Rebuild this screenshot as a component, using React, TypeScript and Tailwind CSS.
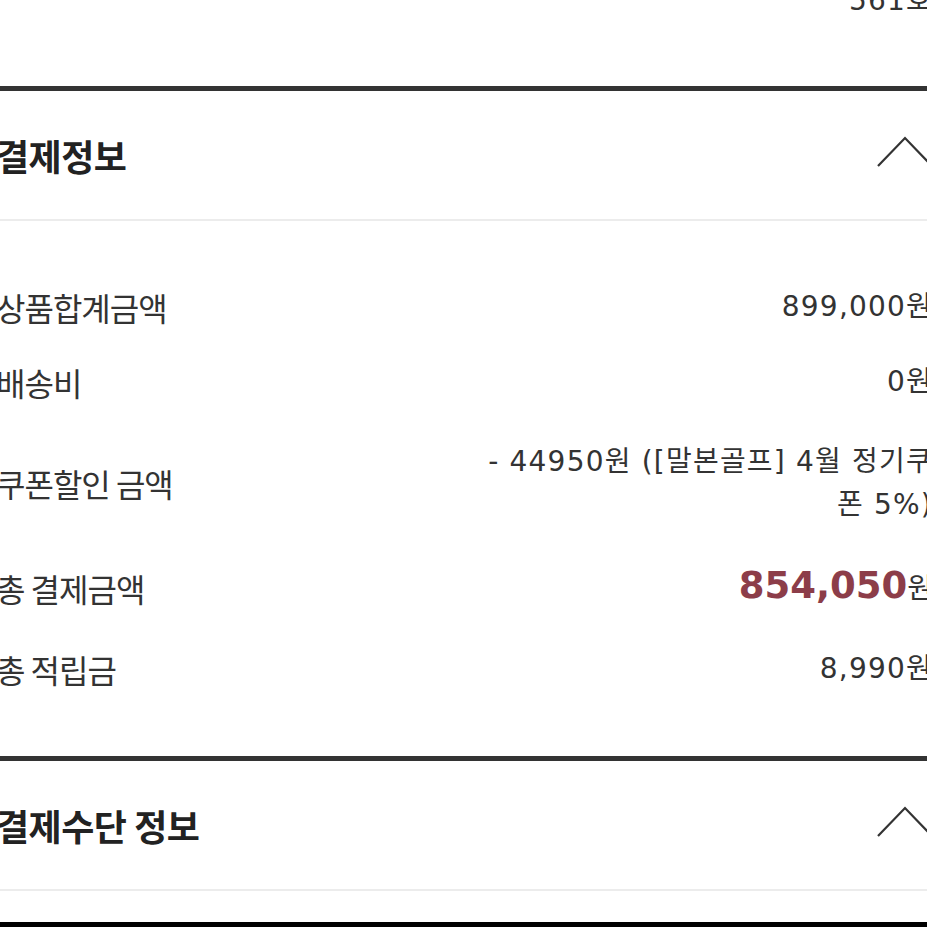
import { ReactNode } from "react";

const korean = "font-['Noto_Sans_CJK_KR','Noto_Sans',sans-serif]";
const numeric = "font-['DejaVu_Sans','Noto_Sans_CJK_KR',sans-serif]";

function Chevron() {
  return (
    <svg width="60" height="36" viewBox="0 0 60 36" fill="none" className="shrink-0">
      <path d="M2 31 L29 3 L56 31" stroke="#333" strokeWidth="2.2" />
    </svg>
  );
}

function SectionHeader({ title }: { title: string }) {
  return (
    <div className="flex h-[130px] items-center justify-between border-b-2 border-[#ececec]">
      <h2 className={`${korean} text-[36px] font-bold tracking-[-0.5px] text-[#222]`}>{title}</h2>
      <div className="-mr-[3px] -mt-[4px]">
        <Chevron />
      </div>
    </div>
  );
}

function Row({ label, children, className = "" }: { label: string; children: ReactNode; className?: string }) {
  return (
    <div className={`flex items-center justify-between ${className}`}>
      <span className={`${korean} text-[32px] leading-[40px] tracking-[-1px] text-[#333]`}>{label}</span>
      <div className="text-right">{children}</div>
    </div>
  );
}

function Won({ value }: { value: string }) {
  return <span className={`${numeric} text-[28px] leading-[40px] tracking-[1.2px] text-[#333]`}>{value}원</span>;
}

export default function App() {
  return (
    <div className="h-[927px] w-full overflow-hidden bg-white">
      <div className="-ml-[4px] w-[calc(100%+10px)]">
        <div className="flex h-[86px] flex-col items-end">
          <div className={`${numeric} -mt-[19px] text-[28px] leading-[40px] tracking-[1.2px] text-[#333]`}>561호</div>
        </div>
        <div className="h-[5px] bg-[#333]" />

        <SectionHeader title="결제정보" />

        <div className="flex flex-col pt-[66px] pb-[67px]">
          <Row label="상품합계금액">
            <Won value="899,000" />
          </Row>
          <Row label="배송비" className="mt-[35px]">
            <Won value="0" />
          </Row>
          <Row label="쿠폰할인 금액" className="mt-[38px]">
            <p
              className={`${numeric} max-w-[460px] break-all text-[28px] leading-[43px] tracking-[1.2px] text-[#333]`}
            >
              - 44950원 ([말본골프] 4월 정기쿠폰 5%)
            </p>
          </Row>
          <Row label="총 결제금액" className="mt-[40px]">
            <span className={`${numeric} text-[37px] font-bold leading-[40px] text-[#8c3d49]`}>854,050</span>
            <span className={`${numeric} text-[28px] leading-[40px] text-[#333]`}>원</span>
          </Row>
          <Row label="총 적립금" className="mt-[40px]">
            <Won value="8,990" />
          </Row>
        </div>

        <div className="h-[5px] bg-[#333]" />
        <SectionHeader title="결제수단 정보" />
        <div className="h-[31px]" />
        <div className="h-[6px] bg-black" />
      </div>
    </div>
  );
}
